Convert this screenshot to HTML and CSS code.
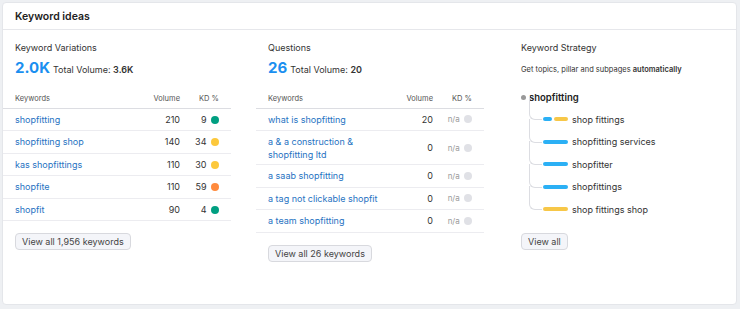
FILE: index.html
```html
<!DOCTYPE html>
<html lang="en">
<head>
    <meta charset="UTF-8">
    <title>Keyword ideas</title>
    <link rel="stylesheet" href="styles.css">
</head>
<body>
    <div class="card">
        <div class="card-header">
            <h2>Keyword ideas</h2>
        </div>
        <div class="columns">
            <!-- Keyword variations -->
            <div class="column">
                <div class="col-title">Keyword Variations</div>
                <div class="summary">
                    <span class="big-num">2.0K</span>
                    <span class="total">Total Volume: <b>3.6K</b></span>
                </div>
                <table class="kw-table">
                    <thead>
                        <tr><th class="kw">Keywords</th><th class="vol">Volume</th><th class="kd">KD %</th></tr>
                    </thead>
                    <tbody>
                        <tr><td class="kw"><a href="#">shopfitting</a></td><td class="vol">210</td><td class="kd">9 <span class="dot green"></span></td></tr>
                        <tr><td class="kw"><a href="#">shopfitting shop</a></td><td class="vol">140</td><td class="kd">34 <span class="dot yellow"></span></td></tr>
                        <tr><td class="kw"><a href="#">kas shopfittings</a></td><td class="vol">110</td><td class="kd">30 <span class="dot yellow"></span></td></tr>
                        <tr><td class="kw"><a href="#">shopfite</a></td><td class="vol">110</td><td class="kd">59 <span class="dot orange"></span></td></tr>
                        <tr><td class="kw"><a href="#">shopfit</a></td><td class="vol">90</td><td class="kd">4 <span class="dot green"></span></td></tr>
                    </tbody>
                </table>
                <button class="btn">View all 1,956 keywords</button>
            </div>

            <!-- Questions -->
            <div class="column">
                <div class="col-title">Questions</div>
                <div class="summary">
                    <span class="big-num">26</span>
                    <span class="total">Total Volume: <b>20</b></span>
                </div>
                <table class="kw-table">
                    <thead>
                        <tr><th class="kw">Keywords</th><th class="vol">Volume</th><th class="kd">KD %</th></tr>
                    </thead>
                    <tbody>
                        <tr><td class="kw"><a href="#">what is shopfitting</a></td><td class="vol">20</td><td class="kd na">n/a <span class="dot gray"></span></td></tr>
                        <tr class="tall"><td class="kw"><a href="#">a &amp; a construction &amp;<br>shopfitting ltd</a></td><td class="vol">0</td><td class="kd na">n/a <span class="dot gray"></span></td></tr>
                        <tr><td class="kw"><a href="#">a saab shopfitting</a></td><td class="vol">0</td><td class="kd na">n/a <span class="dot gray"></span></td></tr>
                        <tr><td class="kw"><a href="#">a tag not clickable shopfit</a></td><td class="vol">0</td><td class="kd na">n/a <span class="dot gray"></span></td></tr>
                        <tr><td class="kw"><a href="#">a team shopfitting</a></td><td class="vol">0</td><td class="kd na">n/a <span class="dot gray"></span></td></tr>
                    </tbody>
                </table>
                <button class="btn">View all 26 keywords</button>
            </div>

            <!-- Keyword strategy -->
            <div class="column">
                <div class="col-title">Keyword Strategy</div>
                <div class="strategy-sub">Get topics, pillar and subpages <b>automatically</b></div>
                <div class="tree">
                    <div class="tree-root"><span class="root-dot"></span>shopfitting</div>
                    <ul class="tree-children">
                        <li><span class="bar"><i class="blue" style="width: 9px"></i><i class="yellow" style="width: 14px"></i></span>shop fittings</li>
                        <li><span class="bar"><i class="blue" style="width: 25px"></i></span>shopfitting services</li>
                        <li><span class="bar"><i class="blue" style="width: 25px"></i></span>shopfitter</li>
                        <li><span class="bar"><i class="blue" style="width: 25px"></i></span>shopfittings</li>
                        <li><span class="bar"><i class="yellow" style="width: 25px"></i></span>shop fittings shop</li>
                    </ul>
                </div>
                <button class="btn">View all</button>
            </div>
        </div>
    </div>
</body>
</html>
```

FILE: styles.css
```css
/* General reset */
* {
    margin: 0;
    padding: 0;
    box-sizing: border-box;
}

body {
    font-family: Inter, "Noto Sans", Arial, sans-serif;
    background-color: #eef0f3;
    padding: 2px 3px 4px 2px;
    height: 309px;
    color: #333;
    font-size: 9px;
}

/* Card */
.card {
    background-color: white;
    border: 1px solid #e4e6ea;
    border-radius: 4px;
    height: 303px;
}

.card-header {
    height: 27px;
    border-bottom: 1px solid #e6e7eb;
    padding: 0 12px;
    display: flex;
    align-items: center;
}

.card-header h2 {
    font-size: 10.5px;
    font-weight: 600;
    color: #222;
}

/* Three columns */
.columns {
    display: grid;
    grid-template-columns: 228px 228px 228px;
    column-gap: 25px;
}

.column {
    padding: 12px 12px 0;
}

.col-title {
    font-size: 9px;
    line-height: 12px;
    color: #333;
}

.summary {
    display: flex;
    align-items: baseline;
    gap: 3px;
    margin-top: 4px;
}

.big-num {
    font-size: 15px;
    font-weight: 700;
    color: #1a8ff0;
    line-height: 20px;
}

.total {
    font-size: 9px;
    color: #333;
}

.total b {
    font-weight: 600;
}

/* Keyword tables */
.kw-table {
    width: calc(100% + 24px);
    margin: 16px -12px 0;
    border-collapse: collapse;
}

.kw-table th {
    font-size: 7.5px;
    font-weight: 400;
    color: #555;
    height: 14px;
    vertical-align: top;
    border-bottom: 1px solid #dcdde2;
}

.kw-table td {
    height: 22.5px;
    border-bottom: 1px solid #ececf0;
    font-size: 9px;
    color: #333;
}

.kw-table tr.tall td {
    height: 34px;
}

.kw-table .kw {
    text-align: left;
    padding-left: 12px;
    white-space: nowrap;
}

.kw-table .vol {
    text-align: right;
    width: 40px;
}

.kw-table .kd {
    text-align: right;
    width: 51px;
    padding-right: 12px;
    white-space: nowrap;
}

.kw-table td.na {
    color: #9a9a9a;
    font-size: 8px;
}

.kw-table a {
    color: #1f73c2;
    text-decoration: none;
    line-height: 13px;
    display: inline-block;
}

.dot {
    display: inline-block;
    width: 8px;
    height: 8px;
    border-radius: 50%;
    margin-left: 2px;
    vertical-align: -1px;
}

.dot.green { background-color: #009f81; }
.dot.yellow { background-color: #fcc83c; }
.dot.orange { background-color: #ff8a3d; }
.dot.gray { background-color: #e0e1e6; }

/* Buttons */
.btn {
    display: block;
    margin-top: 12px;
    height: 17px;
    padding: 0 6px;
    font-family: inherit;
    font-size: 9px;
    color: #444;
    background-color: #f4f5f9;
    border: 1px solid #d8d9de;
    border-radius: 4px;
}

/* Keyword strategy */
.strategy-sub {
    font-size: 7.5px;
    color: #333;
    margin-top: 11px;
}

.strategy-sub b {
    font-weight: 600;
}

.tree {
    margin-top: 17px;
}

.tree-root {
    display: flex;
    align-items: center;
    font-weight: 600;
    font-size: 9.5px;
    color: #222;
    height: 12px;
}

.root-dot {
    width: 5px;
    height: 5px;
    border-radius: 50%;
    background-color: #999;
    margin: 0 3px 0 0;
}

.tree-children {
    list-style: none;
    padding-left: 22px;
    margin-top: 5px;
}

.tree-children li {
    position: relative;
    display: flex;
    align-items: center;
    height: 22.5px;
    font-size: 9px;
    color: #333;
}

.tree-children li::before {
    content: "";
    position: absolute;
    left: -14px;
    top: -12px;
    width: 12px;
    height: 23px;
    border-left: 1px solid #dcdde2;
    border-bottom: 1px solid #dcdde2;
    border-bottom-left-radius: 6px;
}

.bar {
    display: flex;
    gap: 2px;
    width: 25px;
    margin-right: 4px;
}

.bar i {
    display: block;
    height: 4px;
    border-radius: 2px;
}

.bar .blue { background-color: #2bb0f5; }
.bar .yellow { background-color: #f7c748; }

.column .tree + .btn {
    margin-top: 12px;
}
```
